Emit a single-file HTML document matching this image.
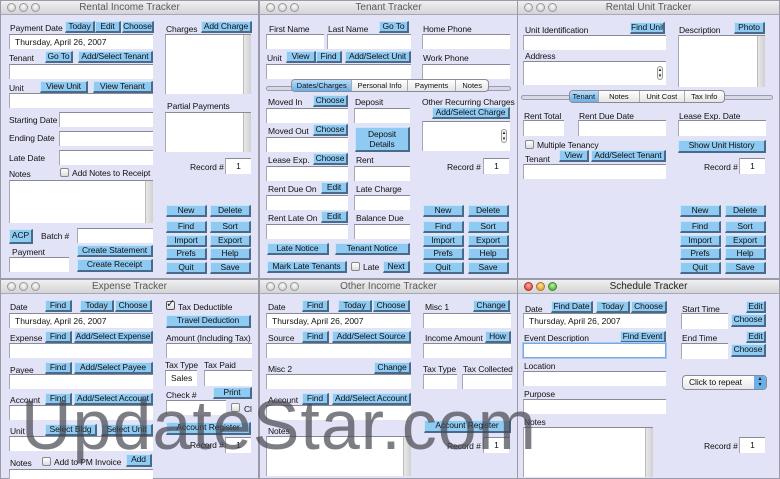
<!DOCTYPE html>
<html><head><meta charset="utf-8"><style>
*{margin:0;padding:0;box-sizing:border-box}
body{width:780px;height:473px;overflow:hidden;background:#b8b8c4;font-family:"Liberation Sans",sans-serif;font-size:8.5px;color:#111;position:relative}
.w{position:absolute;background:#e3e3f7;border:1px solid #9a9aa8;overflow:hidden}
.t{position:absolute;left:0;right:0;top:0;height:14px;background:linear-gradient(#f0f0f0,#d4d4d8);border-bottom:1px solid #a8a8b0;text-align:center;font-size:10px;line-height:14px;color:#5a5a5a}
.dots{position:absolute;left:6px;top:2px}
.dots i{display:inline-block;width:9px;height:9px;border-radius:50%;border:1px solid #999;background:radial-gradient(circle at 50% 35%,#fafafa,#c8c8c8);margin-right:3px}
.dots.c i:nth-child(1){background:radial-gradient(circle at 50% 35%,#ffb0a0,#d03020);border-color:#a33}
.dots.c i:nth-child(2){background:radial-gradient(circle at 50% 35%,#ffe0a0,#e09010);border-color:#a73}
.dots.c i:nth-child(3){background:radial-gradient(circle at 50% 35%,#c0f0a0,#40a020);border-color:#383}
.a{position:absolute;white-space:nowrap;letter-spacing:-0.1px}
.b{position:absolute;height:12px;background:#8fcaf2;border-right:2px solid #4a6a8a;border-bottom:2px solid #4a6a8a;border-top:1px solid #c8e6fa;border-left:1px solid #c8e6fa;text-align:center;line-height:9px;font-size:8.5px;letter-spacing:-0.1px;white-space:nowrap;color:#111;overflow:hidden}
.f{position:absolute;height:15px;background:#fff;border-top:1px solid #8a8a96;border-left:1px solid #a8a8b4;line-height:14px;padding-left:5px;font-size:8.5px;white-space:nowrap}
.sb{position:absolute;right:0;top:0;bottom:0;width:8px;background:linear-gradient(90deg,#e8e8e8,#d0d0d0);border-left:1px solid #bbb}
.cb{position:absolute;width:9px;height:9px;border:1px solid #888;border-radius:2px;background:linear-gradient(#fff,#ddd)}
.tabbar{position:absolute;height:5px;border:1px solid #9a9ab0;border-radius:3px;background:#d8d8e4}
.tabs{position:absolute;height:13px;display:flex;border:1px solid #8a8a9a;border-radius:4px;overflow:hidden;background:linear-gradient(#fff,#e4e4e4);font-size:7.5px;line-height:12px}
.tabs span{border-right:1px solid #aaa;text-align:center}
.tabs span.s{background:linear-gradient(#b8dcf8,#6ab0e8)}
.st{position:absolute;right:3px;width:6px;height:14px;border:1px solid #999;border-radius:3px;background:#f4f4f4;font-size:5px;line-height:6px;text-align:center}
.wm{position:absolute;left:21px;top:385px;font-size:70px;line-height:80px;font-family:"Liberation Sans",sans-serif;color:rgba(70,70,80,0.7);letter-spacing:1px;white-space:nowrap}
</style></head><body>

<!-- Window 1 -->
<div class="w" style="left:0;top:0;width:259px;height:279px">
<div class="t">Rental Income Tracker<div class="dots"><i></i><i></i><i></i></div></div>
</div>
<div class="a" style="left:10px;top:23px">Payment Date</div>
<div class="b" style="left:65px;top:21px;width:30px">Today</div>
<div class="b" style="left:95px;top:21px;width:26px">Edit</div>
<div class="b" style="left:122px;top:21px;width:32px">Choose</div>
<div class="f" style="left:9px;top:34px;width:144px">Thursday, April 26, 2007</div>
<div class="a" style="left:9px;top:53px">Tenant</div>
<div class="b" style="left:45px;top:51px;width:28px">Go To</div>
<div class="b" style="left:78px;top:51px;width:75px">Add/Select Tenant</div>
<div class="f" style="left:9px;top:64px;width:144px"></div>
<div class="a" style="left:9px;top:83px">Unit</div>
<div class="b" style="left:40px;top:81px;width:48px">View Unit</div>
<div class="b" style="left:93px;top:81px;width:60px">View Tenant</div>
<div class="f" style="left:9px;top:93px;width:144px"></div>
<div class="a" style="left:9px;top:115px">Starting Date</div>
<div class="f" style="left:59px;top:112px;width:94px"></div>
<div class="a" style="left:9px;top:133px">Ending Date</div>
<div class="f" style="left:59px;top:131px;width:94px"></div>
<div class="a" style="left:9px;top:153px">Late Date</div>
<div class="f" style="left:59px;top:150px;width:94px"></div>
<div class="a" style="left:9px;top:169px">Notes</div>
<div class="cb" style="left:60px;top:168px"></div>
<div class="a" style="left:72px;top:168px">Add Notes to Receipt</div>
<div class="f" style="left:9px;top:180px;width:144px;height:43px"><div class="sb"></div></div>
<div class="b" style="left:9px;top:229px;width:24px;height:15px;line-height:11px">ACP</div>
<div class="a" style="left:41px;top:231px">Batch #</div>
<div class="f" style="left:77px;top:228px;width:76px"></div>
<div class="a" style="left:12px;top:247px">Payment</div>
<div class="f" style="left:9px;top:257px;width:60px"></div>
<div class="b" style="left:77px;top:245px;width:76px">Create Statement</div>
<div class="b" style="left:77px;top:259px;width:76px;height:13px">Create Receipt</div>
<div class="a" style="left:166px;top:24px">Charges</div>
<div class="b" style="left:201px;top:21px;width:51px">Add Charge</div>
<div class="f" style="left:165px;top:34px;width:86px;height:60px"><div class="sb"></div></div>
<div class="a" style="left:167px;top:101px">Partial Payments</div>
<div class="f" style="left:165px;top:112px;width:86px;height:40px"><div class="sb"></div></div>
<div class="a" style="left:190px;top:162px">Record #</div>
<div class="f" style="left:225px;top:158px;width:26px;height:16px;text-align:center;padding:0">1</div>

<!-- Window 2 -->
<div class="w" style="left:259px;top:0;width:259px;height:279px">
<div class="t">Tenant Tracker<div class="dots"><i></i><i></i><i></i></div></div>
</div>
<div class="a" style="left:269px;top:24px">First Name</div>
<div class="a" style="left:328px;top:24px">Last Name</div>
<div class="b" style="left:379px;top:21px;width:30px">Go To</div>
<div class="f" style="left:266px;top:34px;width:58px"></div>
<div class="f" style="left:327px;top:34px;width:84px"></div>
<div class="a" style="left:423px;top:24px">Home Phone</div>
<div class="f" style="left:422px;top:34px;width:88px"></div>
<div class="a" style="left:267px;top:53px">Unit</div>
<div class="b" style="left:286px;top:51px;width:30px">View</div>
<div class="b" style="left:316px;top:51px;width:26px">Find</div>
<div class="b" style="left:345px;top:51px;width:66px">Add/Select Unit</div>
<div class="f" style="left:266px;top:64px;width:145px"></div>
<div class="a" style="left:423px;top:53px">Work Phone</div>
<div class="f" style="left:422px;top:64px;width:88px"></div>
<div class="tabbar" style="left:266px;top:86px;width:245px"></div>
<div class="tabs" style="left:291px;top:79px;width:198px"><span class="s" style="width:61px">Dates/Charges</span><span style="width:56px">Personal Info</span><span style="width:49px">Payments</span><span style="width:32px;border:0">Notes</span></div>
<div class="a" style="left:268px;top:97px">Moved In</div>
<div class="b" style="left:313px;top:95px;width:35px">Choose</div>
<div class="f" style="left:266px;top:108px;width:82px"></div>
<div class="a" style="left:355px;top:97px">Deposit</div>
<div class="f" style="left:354px;top:108px;width:56px"></div>
<div class="a" style="left:268px;top:126px">Moved Out</div>
<div class="b" style="left:313px;top:124px;width:35px">Choose</div>
<div class="f" style="left:266px;top:137px;width:82px"></div>
<div class="b" style="left:355px;top:127px;width:55px;height:25px;line-height:10px;padding-top:1px">Deposit<br>Details</div>
<div class="a" style="left:268px;top:155px">Lease Exp.</div>
<div class="b" style="left:313px;top:153px;width:35px">Choose</div>
<div class="f" style="left:266px;top:166px;width:82px"></div>
<div class="a" style="left:356px;top:155px">Rent</div>
<div class="f" style="left:354px;top:166px;width:56px"></div>
<div class="a" style="left:268px;top:184px">Rent Due On</div>
<div class="b" style="left:321px;top:182px;width:27px">Edit</div>
<div class="f" style="left:266px;top:195px;width:82px"></div>
<div class="a" style="left:356px;top:184px">Late Charge</div>
<div class="f" style="left:354px;top:195px;width:56px"></div>
<div class="a" style="left:268px;top:213px">Rent Late On</div>
<div class="b" style="left:321px;top:211px;width:27px">Edit</div>
<div class="f" style="left:266px;top:224px;width:82px"></div>
<div class="a" style="left:356px;top:213px">Balance Due</div>
<div class="f" style="left:354px;top:224px;width:56px"></div>
<div class="b" style="left:267px;top:243px;width:62px">Late Notice</div>
<div class="b" style="left:335px;top:243px;width:75px">Tenant Notice</div>
<div class="b" style="left:267px;top:261px;width:80px">Mark Late Tenants</div>
<div class="cb" style="left:351px;top:262px"></div>
<div class="a" style="left:363px;top:262px">Late</div>
<div class="b" style="left:383px;top:261px;width:27px">Next</div>
<div class="a" style="left:422px;top:97px">Other Recurring Charges</div>
<div class="b" style="left:432px;top:107px;width:78px">Add/Select Charge</div>
<div class="f" style="left:422px;top:121px;width:88px;height:30px"><div class="st" style="top:7px">▴<br>▾</div></div>
<div class="a" style="left:447px;top:162px">Record #</div>
<div class="f" style="left:483px;top:158px;width:26px;height:16px;text-align:center;padding:0">1</div>

<!-- Window 3 -->
<div class="w" style="left:517px;top:0;width:263px;height:279px">
<div class="t">Rental Unit Tracker<div class="dots"><i></i><i></i><i></i></div></div>
</div>
<div class="a" style="left:525px;top:25px">Unit Identification</div>
<div class="b" style="left:630px;top:22px;width:35px">Find Unit</div>
<div class="f" style="left:523px;top:35px;width:143px"></div>
<div class="a" style="left:679px;top:25px">Description</div>
<div class="b" style="left:734px;top:22px;width:31px">Photo</div>
<div class="f" style="left:678px;top:35px;width:87px;height:52px"><div class="sb"></div></div>
<div class="a" style="left:525px;top:51px">Address</div>
<div class="f" style="left:523px;top:61px;width:143px;height:24px"><div class="st" style="top:4px">▴<br>▾</div></div>
<div class="tabbar" style="left:521px;top:95px;width:252px"></div>
<div class="tabs" style="left:569px;top:90px;width:156px"><span class="s" style="width:29px">Tenant</span><span style="width:42px">Notes</span><span style="width:45px">Unit Cost</span><span style="width:40px;border:0">Tax Info</span></div>
<div class="a" style="left:524px;top:111px">Rent Total</div>
<div class="f" style="left:523px;top:120px;width:41px;height:16px"></div>
<div class="a" style="left:579px;top:111px">Rent Due Date</div>
<div class="f" style="left:578px;top:120px;width:88px;height:16px"></div>
<div class="a" style="left:679px;top:111px">Lease Exp. Date</div>
<div class="f" style="left:678px;top:120px;width:88px;height:16px"></div>
<div class="cb" style="left:525px;top:140px"></div>
<div class="a" style="left:537px;top:140px">Multiple Tenancy</div>
<div class="b" style="left:678px;top:140px;width:88px;height:13px">Show Unit History</div>
<div class="a" style="left:525px;top:154px">Tenant</div>
<div class="b" style="left:559px;top:150px;width:30px">View</div>
<div class="b" style="left:591px;top:150px;width:75px">Add/Select Tenant</div>
<div class="f" style="left:523px;top:164px;width:143px"></div>
<div class="a" style="left:704px;top:162px">Record #</div>
<div class="f" style="left:739px;top:158px;width:26px;height:16px;text-align:center;padding:0">1</div>

<!-- button grids -->
<div class="b" style="left:166px;top:205px;width:41px">New</div><div class="b" style="left:210px;top:205px;width:41px">Delete</div>
<div class="b" style="left:166px;top:221px;width:41px">Find</div><div class="b" style="left:210px;top:221px;width:41px">Sort</div>
<div class="b" style="left:166px;top:235px;width:41px">Import</div><div class="b" style="left:210px;top:235px;width:41px">Export</div>
<div class="b" style="left:166px;top:248px;width:41px">Prefs</div><div class="b" style="left:210px;top:248px;width:41px">Help</div>
<div class="b" style="left:166px;top:262px;width:41px">Quit</div><div class="b" style="left:210px;top:262px;width:41px">Save</div>

<div class="b" style="left:423px;top:205px;width:41px">New</div><div class="b" style="left:468px;top:205px;width:41px">Delete</div>
<div class="b" style="left:423px;top:221px;width:41px">Find</div><div class="b" style="left:468px;top:221px;width:41px">Sort</div>
<div class="b" style="left:423px;top:235px;width:41px">Import</div><div class="b" style="left:468px;top:235px;width:41px">Export</div>
<div class="b" style="left:423px;top:248px;width:41px">Prefs</div><div class="b" style="left:468px;top:248px;width:41px">Help</div>
<div class="b" style="left:423px;top:262px;width:41px">Quit</div><div class="b" style="left:468px;top:262px;width:41px">Save</div>

<div class="b" style="left:680px;top:205px;width:41px">New</div><div class="b" style="left:725px;top:205px;width:41px">Delete</div>
<div class="b" style="left:680px;top:221px;width:41px">Find</div><div class="b" style="left:725px;top:221px;width:41px">Sort</div>
<div class="b" style="left:680px;top:235px;width:41px">Import</div><div class="b" style="left:725px;top:235px;width:41px">Export</div>
<div class="b" style="left:680px;top:248px;width:41px">Prefs</div><div class="b" style="left:725px;top:248px;width:41px">Help</div>
<div class="b" style="left:680px;top:262px;width:41px">Quit</div><div class="b" style="left:725px;top:262px;width:41px">Save</div>

<!-- Window 4 -->
<div class="w" style="left:0;top:279px;width:259px;height:200px">
<div class="t">Expense Tracker<div class="dots"><i></i><i></i><i></i></div></div>
</div>
<div class="a" style="left:10px;top:302px">Date</div>
<div class="b" style="left:45px;top:300px;width:27px">Find</div>
<div class="b" style="left:80px;top:300px;width:34px">Today</div>
<div class="b" style="left:115px;top:300px;width:37px">Choose</div>
<div class="f" style="left:9px;top:313px;width:144px">Thursday, April 26, 2007</div>
<div class="a" style="left:10px;top:333px">Expense</div>
<div class="b" style="left:45px;top:331px;width:27px">Find</div>
<div class="b" style="left:74px;top:331px;width:79px">Add/Select Expense</div>
<div class="f" style="left:9px;top:343px;width:144px"></div>
<div class="a" style="left:10px;top:365px">Payee</div>
<div class="b" style="left:45px;top:362px;width:27px">Find</div>
<div class="b" style="left:74px;top:362px;width:79px">Add/Select Payee</div>
<div class="f" style="left:9px;top:374px;width:144px"></div>
<div class="a" style="left:10px;top:395px">Account</div>
<div class="b" style="left:45px;top:393px;width:27px">Find</div>
<div class="b" style="left:74px;top:393px;width:79px">Add/Select Account</div>
<div class="f" style="left:9px;top:405px;width:144px"></div>
<div class="a" style="left:10px;top:426px">Unit</div>
<div class="b" style="left:45px;top:424px;width:52px">Select Bldg</div>
<div class="b" style="left:101px;top:424px;width:52px">Select Unit</div>
<div class="f" style="left:9px;top:436px;width:144px"></div>
<div class="a" style="left:10px;top:458px">Notes</div>
<div class="cb" style="left:42px;top:457px"></div>
<div class="a" style="left:54px;top:457px">Add to PM Invoice</div>
<div class="b" style="left:126px;top:454px;width:26px;height:13px">Add</div>
<div class="f" style="left:9px;top:469px;width:144px;height:10px"></div>
<div class="cb" style="left:166px;top:301px;border-color:#555"></div>
<div class="a" style="left:166px;top:297px;font-size:11px;color:#223">✓</div>
<div class="a" style="left:178px;top:302px">Tax Deductible</div>
<div class="b" style="left:166px;top:315px;width:85px;height:13px">Travel Deduction</div>
<div class="a" style="left:166px;top:333px">Amount (Including Tax)</div>
<div class="f" style="left:166px;top:343px;width:86px"></div>
<div class="a" style="left:165px;top:360px">Tax Type</div>
<div class="a" style="left:204px;top:360px">Tax Paid</div>
<div class="f" style="left:165px;top:370px;width:32px;height:16px">Sales</div>
<div class="f" style="left:204px;top:370px;width:48px;height:16px"></div>
<div class="a" style="left:166px;top:390px">Check #</div>
<div class="b" style="left:213px;top:387px;width:39px">Print</div>
<div class="f" style="left:166px;top:400px;width:60px"></div>
<div class="cb" style="left:231px;top:403px"></div>
<div class="a" style="left:244px;top:404px">Cl</div>
<div class="b" style="left:166px;top:422px;width:85px;height:13px">Account Register</div>
<div class="a" style="left:190px;top:440px">Record #</div>
<div class="f" style="left:225px;top:437px;width:26px;height:16px;text-align:center;padding:0">1</div>

<!-- Window 5 -->
<div class="w" style="left:259px;top:279px;width:259px;height:200px">
<div class="t">Other Income Tracker<div class="dots"><i></i><i></i><i></i></div></div>
</div>
<div class="a" style="left:268px;top:302px">Date</div>
<div class="b" style="left:302px;top:300px;width:27px">Find</div>
<div class="b" style="left:338px;top:300px;width:34px">Today</div>
<div class="b" style="left:373px;top:300px;width:37px">Choose</div>
<div class="f" style="left:266px;top:313px;width:145px">Thursday, April 26, 2007</div>
<div class="a" style="left:268px;top:333px">Source</div>
<div class="b" style="left:302px;top:331px;width:27px">Find</div>
<div class="b" style="left:332px;top:331px;width:79px">Add/Select Source</div>
<div class="f" style="left:266px;top:343px;width:145px"></div>
<div class="a" style="left:268px;top:364px">Misc 2</div>
<div class="b" style="left:374px;top:362px;width:37px">Change</div>
<div class="f" style="left:266px;top:374px;width:145px"></div>
<div class="a" style="left:268px;top:395px">Account</div>
<div class="b" style="left:302px;top:393px;width:27px">Find</div>
<div class="b" style="left:332px;top:393px;width:79px">Add/Select Account</div>
<div class="f" style="left:266px;top:405px;width:145px"></div>
<div class="a" style="left:268px;top:426px">Notes</div>
<div class="f" style="left:266px;top:436px;width:145px;height:40px"><div class="sb"></div></div>
<div class="a" style="left:425px;top:302px">Misc 1</div>
<div class="b" style="left:473px;top:300px;width:37px">Change</div>
<div class="f" style="left:423px;top:313px;width:88px"></div>
<div class="a" style="left:425px;top:333px">Income Amount</div>
<div class="b" style="left:485px;top:331px;width:26px">How</div>
<div class="f" style="left:423px;top:343px;width:88px"></div>
<div class="a" style="left:423px;top:364px">Tax Type</div>
<div class="a" style="left:463px;top:364px">Tax Collected</div>
<div class="f" style="left:423px;top:374px;width:34px"></div>
<div class="f" style="left:462px;top:374px;width:50px"></div>
<div class="b" style="left:424px;top:420px;width:87px;height:13px">Account Register</div>
<div class="a" style="left:447px;top:441px">Record #</div>
<div class="f" style="left:483px;top:437px;width:26px;height:16px;text-align:center;padding:0">1</div>

<!-- Window 6 -->
<div class="w" style="left:517px;top:279px;width:263px;height:200px">
<div class="t" style="color:#222">Schedule Tracker<div class="dots c"><i></i><i></i><i></i></div></div>
</div>
<div class="a" style="left:525px;top:304px">Date</div>
<div class="b" style="left:551px;top:301px;width:42px">Find Date</div>
<div class="b" style="left:596px;top:301px;width:34px">Today</div>
<div class="b" style="left:631px;top:301px;width:36px">Choose</div>
<div class="f" style="left:523px;top:313px;width:143px">Thursday, April 26, 2007</div>
<div class="a" style="left:524px;top:333px">Event Description</div>
<div class="b" style="left:620px;top:331px;width:46px">Find Event</div>
<div class="f" style="left:523px;top:343px;width:143px;border:1px solid #7aa8e0;box-shadow:0 0 0 1px #a8c8f0"></div>
<div class="a" style="left:524px;top:361px">Location</div>
<div class="f" style="left:523px;top:371px;width:143px"></div>
<div class="a" style="left:524px;top:389px">Purpose</div>
<div class="f" style="left:523px;top:399px;width:143px"></div>
<div class="a" style="left:524px;top:417px">Notes</div>
<div class="f" style="left:523px;top:427px;width:130px;height:50px"><div class="sb"></div></div>
<div class="a" style="left:682px;top:304px">Start Time</div>
<div class="b" style="left:746px;top:301px;width:20px">Edit</div>
<div class="f" style="left:681px;top:313px;width:47px;height:16px"></div>
<div class="b" style="left:731px;top:314px;width:35px;height:13px">Choose</div>
<div class="a" style="left:682px;top:333px">End Time</div>
<div class="b" style="left:746px;top:331px;width:20px">Edit</div>
<div class="f" style="left:681px;top:343px;width:47px;height:16px"></div>
<div class="b" style="left:731px;top:344px;width:35px;height:13px">Choose</div>
<div class="a" style="left:682px;top:375px;width:85px;height:15px;border:1px solid #8a8a9a;border-radius:4px;background:linear-gradient(#fff,#e8e8e8);padding-left:6px;line-height:13px">Click to repeat<span style="position:absolute;right:0;top:0;width:12px;height:13px;background:#6ab0e8;border-radius:0 3px 3px 0;font-size:6px;line-height:6px;text-align:center">▴<br>▾</span></div>
<div class="a" style="left:704px;top:441px">Record #</div>
<div class="f" style="left:739px;top:437px;width:26px;height:16px;text-align:center;padding:0">1</div>

<div class="wm">UpdateStar.com</div>
</body></html>
